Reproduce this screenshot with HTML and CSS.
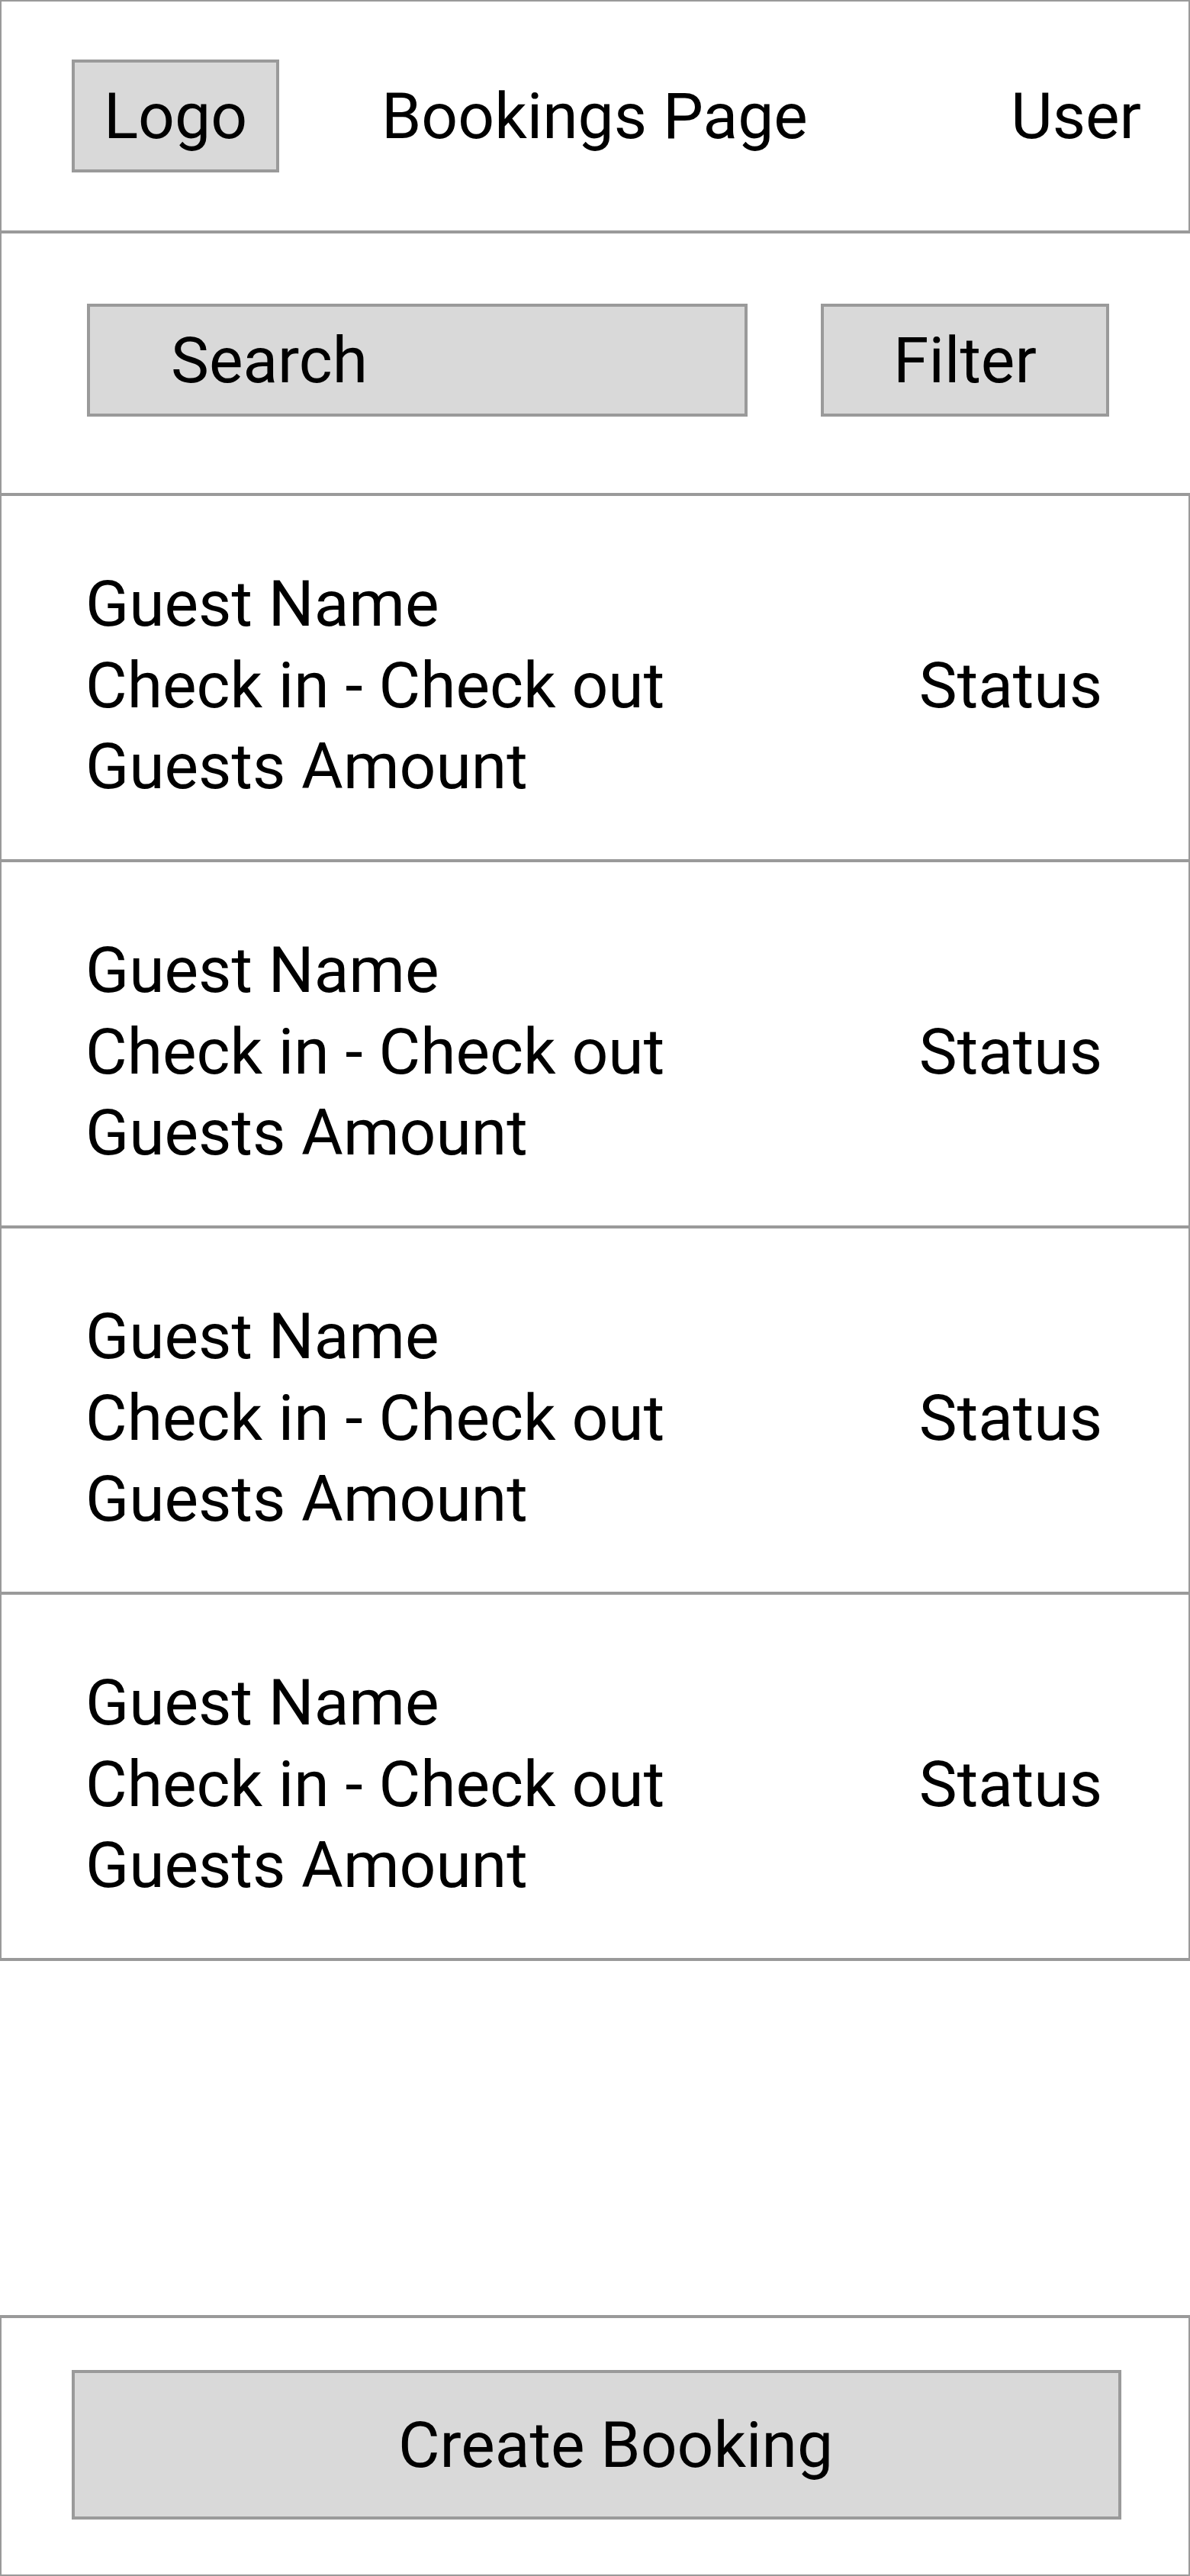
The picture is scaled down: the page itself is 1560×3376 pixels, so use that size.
FILE: index.html
```html
<!DOCTYPE html>
<html lang="en">
<head>
<meta charset="utf-8">
<title>Bookings Page</title>
<link rel="stylesheet" href="styles.css">
</head>
<body>
<div class="page">
  <header class="topbar">
    <div class="logo box">Logo</div>
    <div class="title">Bookings Page</div>
    <div class="user">User</div>
  </header>
  <section class="toolbar">
    <div class="search box">Search</div>
    <div class="filter box">Filter</div>
  </section>
  <ul class="bookings">
    <li class="booking">
      <div class="info">
        <div>Guest Name</div>
        <div>Check in - Check out</div>
        <div>Guests Amount</div>
      </div>
      <div class="status">Status</div>
    </li>
    <li class="booking">
      <div class="info">
        <div>Guest Name</div>
        <div>Check in - Check out</div>
        <div>Guests Amount</div>
      </div>
      <div class="status">Status</div>
    </li>
    <li class="booking">
      <div class="info">
        <div>Guest Name</div>
        <div>Check in - Check out</div>
        <div>Guests Amount</div>
      </div>
      <div class="status">Status</div>
    </li>
    <li class="booking">
      <div class="info">
        <div>Guest Name</div>
        <div>Check in - Check out</div>
        <div>Guests Amount</div>
      </div>
      <div class="status">Status</div>
    </li>
  </ul>
  <div class="spacer"></div>
  <footer class="footer">
    <div class="create box">Create Booking</div>
  </footer>
</div>
</body>
</html>
```

FILE: styles.css
```css
* { box-sizing: border-box; }
html, body {
  margin: 0;
  padding: 0;
  background: #ffffff;
}
body {
  font-family: Roboto, "Liberation Sans", sans-serif;
  font-size: 84px;
  color: #000;
}
.page {
  width: 1560px;
  height: 3376px;
  overflow: hidden;
  display: flex;
  flex-direction: column;
}
.box {
  background: #d9d9d9;
  border: 4px solid #9a9a9a;
  height: 148px;
  display: flex;
  align-items: center;
}

/* header */
.topbar {
  height: 306px;
  flex: none;
  display: flex;
  align-items: center;
  border-top: 2px solid #9a9a9a;
  border-left: 2px solid #9a9a9a;
  border-right: 2px solid #9a9a9a;
  border-bottom: 4px solid #9a9a9a;
  padding: 0 62px 0 92px;
}
.logo {
  width: 272px;
  justify-content: center;
}
.title {
  margin-left: 134px;
}
.user {
  margin-left: auto;
}

/* search / filter */
.toolbar {
  height: 344px;
  flex: none;
  display: flex;
  align-items: flex-start;
  border-left: 2px solid #9a9a9a;
  border-bottom: 4px solid #9a9a9a;
  padding: 92px 0 0 112px;
  gap: 96px;
}
.search {
  width: 866px;
  padding-left: 106px;
}
.filter {
  width: 378px;
  justify-content: center;
}

/* booking list */
.bookings {
  list-style: none;
  margin: 0;
  padding: 0;
  flex: none;
}
.booking {
  height: 480px;
  display: flex;
  align-items: center;
  justify-content: space-between;
  border-left: 2px solid #9a9a9a;
  border-right: 2px solid #9a9a9a;
  border-bottom: 4px solid #9a9a9a;
  padding: 89px 113px 67px 110px;
  line-height: 106.67px;
}
.spacer {
  height: 464px;
  flex: none;
}

/* footer */
.footer {
  flex: 1;
  border-top: 4px solid #9a9a9a;
  border-left: 2px solid #9a9a9a;
  border-right: 2px solid #9a9a9a;
  border-bottom: 2px solid #9a9a9a;
  padding: 68px 0 0 92px;
}
.create {
  width: 1376px;
  height: 196px;
  justify-content: center;
  padding-left: 50px;
}
```
